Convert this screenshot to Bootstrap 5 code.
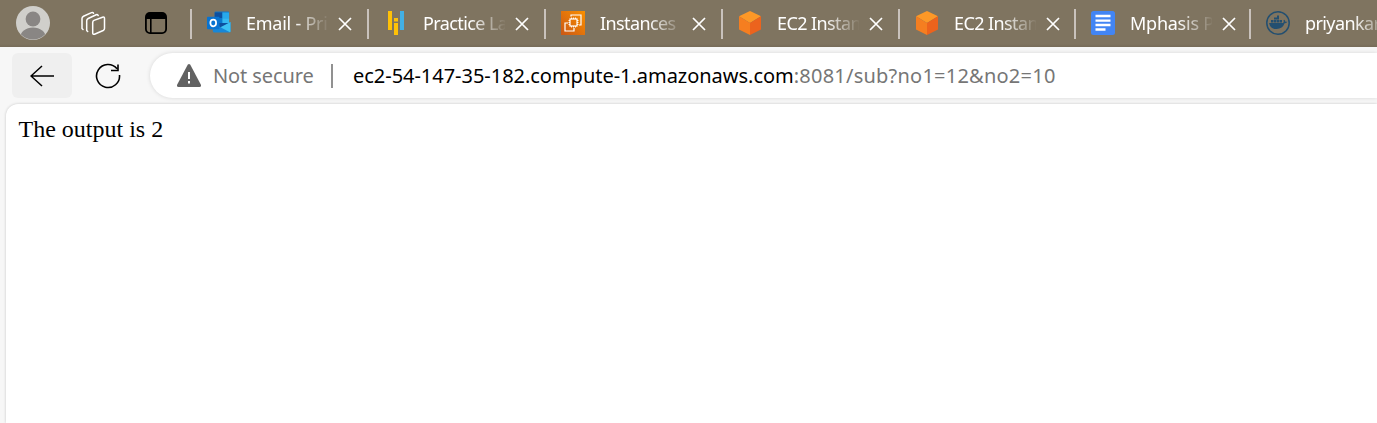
<!DOCTYPE html>
<html lang="en">
<head>
<meta charset="utf-8">
<meta name="viewport" content="width=device-width, initial-scale=1">
<title>ec2-54-147-35-182.compute-1.amazonaws.com</title>
<link href="https://cdn.jsdelivr.net/npm/bootstrap@5.3.0/dist/css/bootstrap.min.css" rel="stylesheet">
<style>
body { background: #f7f7f7; font-family: "Noto Sans", "Open Sans", sans-serif; }
svg { display: block; flex: none; }
.tabstrip { height: 47px; background: linear-gradient(#7f7460 0 44px, #796e5b 46px, #776c59); }
.tools { width: 190px; height: 46px; padding-left: 16px; }
.tab { width: 177px; height: 30px; border-left: 2px solid #c9c2bc; padding-left: 15px; color: #fff; }
.tab > svg:first-child { margin-top: -2px; }
.tab.narrow { width: 176px; } .tab.narrower { width: 175px; }
.tab-title { width: 82px; margin: -2px 0 0 15px; font-size: 18px; line-height: 28px; letter-spacing: -.25px;
  -webkit-mask-image: linear-gradient(90deg, #000 58%, transparent 102%); mask-image: linear-gradient(90deg, #000 58%, transparent 102%); }
.tab-title.tight { letter-spacing: -.6px; }
.tab-close { margin-left: 10px; }
.toolbar { height: 57px; padding: 6px 0 6px 12px; }
.back { width: 60px; height: 45px; background: #efefef; border-radius: 6px; }
.reload { width: 78px; padding-left: 23px; }
.address { height: 45px; border-radius: 23px 0 0 23px; box-shadow: 0 0 4px #0002; padding-left: 27px; color: #767676; font-size: 20px; }
.divider { width: 2px; height: 24px; background: #919191; }
.page { margin-left: 6px; height: 319px; border-radius: 12px 0 0 0; box-shadow: 0 0 3px #0003; padding: 9px 12.5px;
  font: 24px/32px "Liberation Serif", serif; color: #000; }
.secure { width: 118px; margin-left: 12px; letter-spacing: -.1px; }
.url { margin-left: 20px; letter-spacing: .23px; }
.host { letter-spacing: -.03px; color: #000; }
</style>
</head>
<body class="overflow-hidden">
<svg width="0" height="0" class="position-absolute" aria-hidden="true">
  <symbol id="close" viewBox="0 0 14 14"><path d="M1 1l12 12M13 1L1 13" stroke="#fff" stroke-width="1.7"/></symbol>
  <symbol id="cube" viewBox="0 0 24 24"><path d="M12 0l11 5.3L12 12 1 5.3z" fill="#fd9827"/><path d="M1 5.3L12 12v12L1 18.5z" fill="#f57e20"/><path d="M23 5.3L12 12v12l11-5.5z" fill="#ec631d"/></symbol>
</svg>
<header class="tabstrip d-flex overflow-hidden">
  <div class="tools d-flex flex-shrink-0 align-items-center">
    <svg width="34" height="34" viewBox="0 0 34 34"><defs><clipPath id="face"><circle cx="17" cy="17" r="16.5"/></clipPath></defs><circle cx="17" cy="17" r="17" fill="#d0cfcb"/><g clip-path="url(#face)" fill="#898684"><circle cx="17" cy="13" r="7.4"/><ellipse cx="17" cy="32" rx="13" ry="10.5"/></g></svg>
    <svg class="ms-4 me-4" width="38" height="30" viewBox="74 8 38 30" fill="none" stroke="#fff" stroke-width="1.5" stroke-linejoin="round" stroke-linecap="round"><path d="M83 29.5l-1-1V18.5q0-1.500 1.500-2.200l8-3.700q1.500-.6 2 .6M87.700 31.500l-1-1V20.700q0-1.500 1.500-2.200l8-3.700q1.500-.6 2 .8M94 20.400l8.500-3.200q2-.6 2 1.300v10q0 1.400-1.300 2l-8.700 3.700q-1.800.6-1.800-1.200V22.500q0-1.500 1.300-2.100z"/></svg>
    <svg style="margin-left:9px" width="22" height="22" viewBox="0 0 22 22"><rect x=".9" y=".9" width="20.200" height="20.200" rx="4" fill="none" stroke="#000" stroke-width="1.800"/><path d="M1 7V4q0-3 3-3h14q3 0 3 3v3zM5 6h1.600v15H5z"/></svg>
  </div>
  <nav class="d-flex flex-shrink-0" style="padding-top:9px">
    <div class="tab d-flex align-items-center"><svg width="24" height="24" viewBox="0 0 25 24"><path d="M8 1q0-1 1-1h13q1 0 1 1v13H8z" fill="#1475c5"/><path d="M8 1h8v6H8z" fill="#0d4f9f"/><path d="M16 1h7v6h-7z" fill="#28a8ea"/><path d="M8 7h8v7H8z" fill="#0879cf"/><path d="M16 7h7v7h-7z" fill="#35b8f1"/><path d="M6 13l9 3.500 9.500-5.500v9.500q0 1.500-1.500 1.500H8q-2 0-2-2z" fill="#1787d8"/><path d="M8 12h15l-8 5z" fill="#0d4f9f"/><path d="M24.500 11v9.500q0 1-.6 1.200L14 16.500z" fill="#3cc1f3"/><rect y="5.500" width="13" height="13" rx="1" fill="#0873d1"/><ellipse cx="6.500" cy="12" rx="3" ry="3.400" fill="none" stroke="#fff" stroke-width="1.800"/></svg>
      <div class="tab-title text-nowrap overflow-hidden flex-shrink-0">Email - Pri</div><svg class="tab-close" width="14" height="14"><use href="#close"/></svg></div>
    <div class="tab d-flex align-items-center"><svg width="24" height="24" viewBox="0 0 24 24"><path d="M4 0h4v19H4zM10 12h4v12h-4zM10 7h4v3.500h-4z" fill="#ffc107"/><path d="M16 0h4v19h-4z" fill="#43b0e5"/></svg>
      <div class="tab-title tight text-nowrap overflow-hidden flex-shrink-0">Practice La</div><svg class="tab-close" width="14" height="14"><use href="#close"/></svg></div>
    <div class="tab d-flex align-items-center"><svg width="24" height="24" viewBox="0 0 24 24"><defs><linearGradient id="aws" x1="0" y1="1" x2="1" y2="0"><stop stop-color="#cb5715"/><stop offset="1" stop-color="#fa9000"/></linearGradient></defs><path d="M0 0h24v24H0z" fill="url(#aws)"/><g fill="none" stroke="#fff" stroke-width="1.200"><path d="M10 5.500V4h10v10h-2M7 12H4v8h9v-3"/><rect x="9" y="8" width="7" height="7"/><path d="M10.500 6.500V8m2-1.500V8m2-1.500V8M10.500 15v1.500m2-1.500v1.500m2-1.500v1.500M7.500 9.500H9m-1.500 2H9m-1.500 2H9M16 9.500h1.500m-1.500 2h1.500m-1.500 2h1.500" stroke-width=".9"/></g></svg>
      <div class="tab-title tight text-nowrap overflow-hidden flex-shrink-0">Instances |</div><svg class="tab-close" width="14" height="14"><use href="#close"/></svg></div>
    <div class="tab d-flex align-items-center"><svg width="24" height="24"><use href="#cube"/></svg>
      <div class="tab-title tight text-nowrap overflow-hidden flex-shrink-0">EC2 Instan</div><svg class="tab-close" width="14" height="14"><use href="#close"/></svg></div>
    <div class="tab narrow d-flex align-items-center"><svg width="24" height="24"><use href="#cube"/></svg>
      <div class="tab-title tight text-nowrap overflow-hidden flex-shrink-0">EC2 Instan</div><svg class="tab-close" width="14" height="14"><use href="#close"/></svg></div>
    <div class="tab narrower d-flex align-items-center"><svg width="24" height="24" viewBox="0 0 24 24"><rect width="24" height="24" rx="2.500" fill="#4285f4"/><path d="M4.500 5h15M4.500 9.700h15M4.500 14h15M4.500 18.500h10" stroke="#fff" stroke-width="2.300"/></svg>
      <div class="tab-title text-nowrap overflow-hidden flex-shrink-0">Mphasis P</div><svg class="tab-close" width="14" height="14"><use href="#close"/></svg></div>
    <div class="tab d-flex align-items-center"><svg width="24" height="24" viewBox="0 0 24 24" fill="#234f70"><circle cx="12" cy="12" r="11.200" fill="none" stroke="#234f70" stroke-width="1.500"/><path d="M3 12h14q1.200-1 .5-2.700.5-.7 1-.3.800.8.800 1.800h2q-.8 1.500-2.700 1.500-2 5.500-8 5.700Q4 18 3 12zM5 9h2.500v2.500H5zM8 9h2.500v2.500H8zM11 9h2.500v2.500H11zM14 9h2v2.500h-2zM8 6.500h5V8.500H8zM11 4.500h2v2h-2z"/></svg>
      <div class="tab-title tight text-nowrap overflow-hidden flex-shrink-0">priyankar</div></div>
  </nav>
</header>
<div class="toolbar d-flex">
  <div class="back d-flex align-items-center justify-content-center flex-shrink-0"><svg width="24" height="22" viewBox="0 0 24 22"><path d="M12 1L1 11l11 10M1 11h23" fill="none" stroke="#000" stroke-width="1.500"/></svg></div>
  <div class="reload d-flex align-items-center flex-shrink-0"><svg width="26" height="26" viewBox="0 0 26 26"><path d="M24.500 12A11.500 11.500 0 1 1 22 5.800M23 1.500V7.500h-7" fill="none" stroke="#000" stroke-width="1.600"/></svg></div>
  <div class="address bg-white flex-grow-1 d-flex align-items-center">
    <svg width="24" height="23" viewBox="0 0 24 23"><path d="M10.700.8q1.300-1.500 2.600 0L24 21q.3 2-1.500 2h-21Q-.3 23 0 21z" fill="#626262"/><path d="M11 8h2v7h-2zM11 17h2v2.500h-2z" fill="#fff"/></svg>
    <span class="secure text-nowrap">Not secure</span><span class="divider"></span>
    <span class="url text-nowrap"><span class="host">ec2-54-147-35-182.compute-1.amazonaws.com</span>:8081/sub?no1=12&amp;no2=10</span>
  </div>
</div>
<main class="page bg-white">The output is 2</main>
<script src="https://cdn.jsdelivr.net/npm/bootstrap@5.3.0/dist/js/bootstrap.bundle.min.js"></script>
</body>
</html>
